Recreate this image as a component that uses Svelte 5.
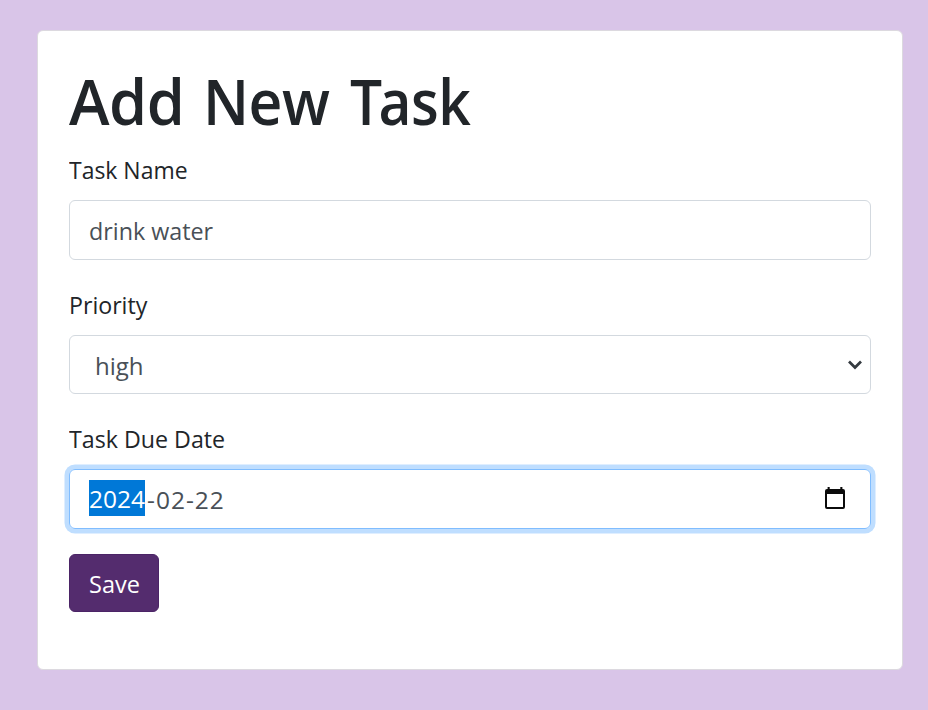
<script>
  let name = $state('drink water');
  let priority = $state('high');
  let date = $state({ year: '2024', month: '02', day: '22' });
</script>

<main>
  <form class="card" onsubmit={(e) => e.preventDefault()}>
    <h1><span class="w1">Add</span><span class="w2">New</span><span class="w3"><span class="cap">T</span>ask</span></h1>

    <div class="label l1">Task Name</div>
    <div class="control"><span class="t-name">{name}</span></div>

    <div class="label l2">Priority</div>
    <div class="control select">
      <span class="t-high">{priority}</span>
      <svg width="16" height="12" viewBox="0 0 16 12">
        <path d="M2 2.5 L8 8.5 L14 2.5" fill="none" stroke="#343a40" stroke-width="2.7" />
      </svg>
    </div>

    <div class="label l3">Task Due Date</div>
    <div class="control date">
      <span class="year">{date.year}</span><span class="rest">-{date.month}-{date.day}</span>
      <svg width="22" height="24" viewBox="0 0 22 24">
        <path fill="#0b0b0b" fill-rule="evenodd" d="M3.6 1h2.1v2h10.6V1h2.1v2h.6a2 2 0 0 1 2 2v16a2 2 0 0 1-2 2H3a2 2 0 0 1-2-2V5a2 2 0 0 1 2-2h.6zM3 8.1V21h16V8.1z" />
      </svg>
    </div>

    <button type="submit"><span>Save</span></button>
  </form>
</main>

<style>
  :global(body) { background: #d9c5e8; }
  main {
    box-sizing: border-box;
    height: 710px;
    padding: 30px 25px 40px 37px;
    font-family: "Open Sans", "Noto Sans", sans-serif;
    font-size: 24.5px;
    color: #212529;
  }
  .card {
    box-sizing: border-box;
    height: 640px;
    padding: 32px 31px 0;
    background: #fff;
    border: 1px solid #dcd9df;
    border-radius: 6px;
  }
  h1 {
    display: flex;
    margin: 0 0 12px;
    font-size: 62.5px;
    font-weight: 570;
    line-height: 76px;
    letter-spacing: -0.5px;
    white-space: nowrap;
  }
  h1 > span { transform-origin: 0 50%; }
  .w1 { width: 134px; transform: scaleX(.98); }
  .w2 { width: 147px; transform: scaleX(.94); }
  .w3 { width: 120px; transform: scaleX(.91); }
  .cap { letter-spacing: -4px; }
  .label {
    height: 38px;
    line-height: 38px;
    margin-bottom: 11px;
    white-space: nowrap;
    transform-origin: 0 50%;
  }
  .l1 { transform: scaleX(.937); }
  .l2 { transform: scaleX(.945); }
  .l3 { transform: scaleX(.947); }
  .control {
    box-sizing: border-box;
    display: flex;
    align-items: center;
    height: 60px;
    margin-bottom: 26px;
    padding: 0 19px;
    border: 1.5px solid #d3d9df;
    border-radius: 6px;
    color: #495057;
  }
  .t-name { transform: scaleX(.95); transform-origin: 0 50%; }
  .select { height: 59px; padding: 0 7px 0 25px; }
  .t-high { padding-top: 2px; transform: scaleX(.98); transform-origin: 0 50%; }
  .control svg { margin-left: auto; display: block; }
  .date {
    margin-bottom: 25px;
    padding: 0 24px 2px 19px;
    border-color: #80bdff;
    box-shadow: 0 0 0 4.5px #bfdeff;
  }
  .year { width: 56px; height: 36px; line-height: 38px; background: #0078d7; color: #fff; text-align: center; }
  .rest { padding: 3px 0 0 2px; letter-spacing: 1px; line-height: 38px; }
  button {
    display: block;
    width: 90px;
    height: 58px;
    padding: 0 0 0 1px;
    border: 1px solid #4b2466;
    border-radius: 6px;
    background: #542c6e;
    color: #fff;
    font: inherit;
  }
  button span { display: inline-block; transform: scaleX(.96); }
</style>
